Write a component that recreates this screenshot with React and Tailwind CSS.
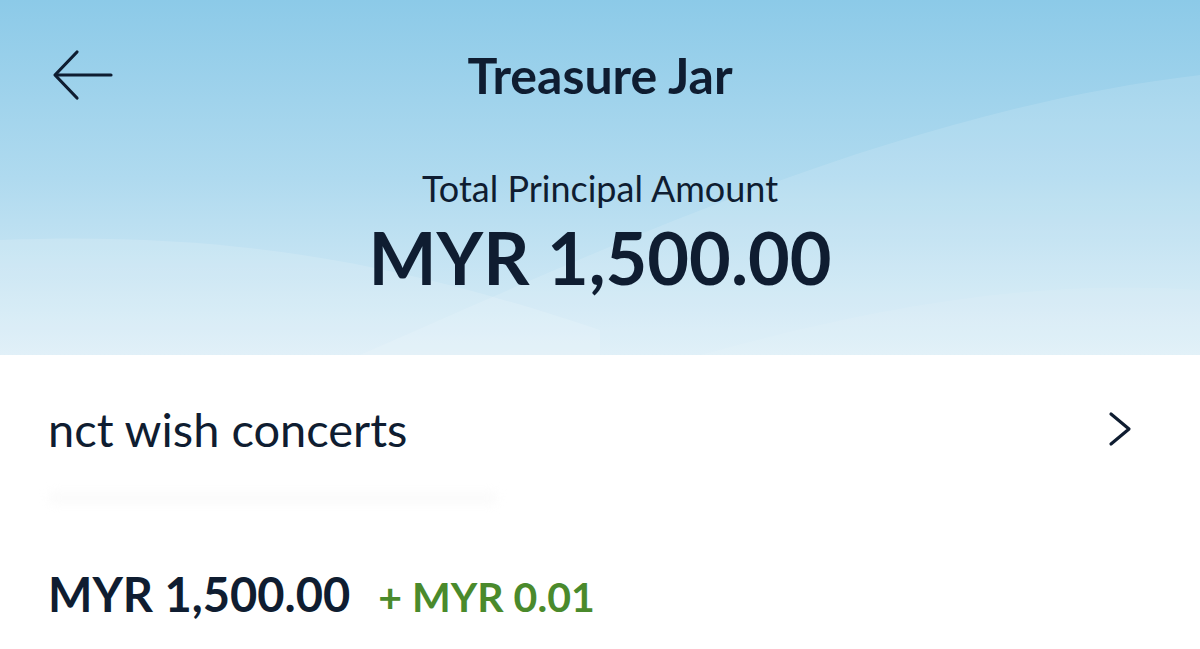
import React from "react";

const Header = () => {
  return (
    <div className="relative h-[355px] overflow-hidden bg-gradient-to-b from-[#8ccae8] via-[#afdaef] to-[#dceef7]">
      {/* soft waves in the background */}
      <svg
        className="absolute inset-0 w-full h-full"
        viewBox="0 0 1200 355"
        preserveAspectRatio="none"
      >
        <path d="M0 240 C 250 230, 420 270, 600 330 L 600 355 L 0 355 Z" fill="#ffffff" fillOpacity="0.14" />
        <path d="M360 355 C 600 250, 900 110, 1200 75 L 1200 355 Z" fill="#ffffff" fillOpacity="0.12" />
        <path d="M700 355 C 900 300, 1050 280, 1200 290 L 1200 355 Z" fill="#ffffff" fillOpacity="0.08" />
      </svg>

      <div className="relative flex flex-col items-center">
        <div className="w-full grid grid-cols-[200px_1fr_200px] items-center pt-[47px]">
          <button className="ml-[50px] w-[64px] h-[56px] flex items-center text-[#0f1d31]">
            <svg viewBox="0 0 64 56" className="w-[64px] h-[56px]" fill="none" stroke="currentColor" strokeWidth={3.2} strokeLinecap="round" strokeLinejoin="round">
              <path d="M7 28 H61" />
              <path d="M27 5 L5 28 L27 51" />
            </svg>
          </button>
          <h1 className="text-center text-[50px] leading-[56px] font-bold text-[#0f1d31]">Treasure Jar</h1>
          <div />
        </div>

        <p className="mt-[65px] text-[36px] leading-[40px] text-[#0f1d31]">Total Principal Amount</p>
        <p className="mt-[9px] text-[72px] leading-[80px] font-bold text-[#0f1d31]">MYR 1,500.00</p>
      </div>
    </div>
  );
};

const JarRow = () => {
  return (
    <div className="px-[48px]">
      <div className="flex items-center justify-between pt-[48px]">
        <span className="text-[47px] leading-[52px] text-[#0f1d31]">nct wish concerts</span>
        <svg viewBox="0 0 26 36" className="w-[26px] h-[36px] mr-[19px] text-[#0f1d31]" fill="none" stroke="currentColor" strokeWidth={3.2} strokeLinecap="round" strokeLinejoin="round">
          <path d="M4 3 L22 18 L4 33" />
        </svg>
      </div>

      {/* blurred subtitle */}
      <div className="mt-[36px] h-[14px] w-[450px] rounded-full bg-[#fbfbfb] blur-[4px]" />

      <div className="flex items-baseline gap-[28px] mt-[64px]">
        <span className="text-[47px] leading-[50px] font-bold text-[#0f1d31]">MYR 1,500.00</span>
        <span className="text-[41px] leading-[50px] font-bold text-[#4a8a2c]">+ MYR 0.01</span>
      </div>
    </div>
  );
};

export default function App() {
  return (
    <div className="w-[1200px] h-[649px] overflow-hidden bg-white font-['Lato',sans-serif]">
      <Header />
      <JarRow />
    </div>
  );
}
